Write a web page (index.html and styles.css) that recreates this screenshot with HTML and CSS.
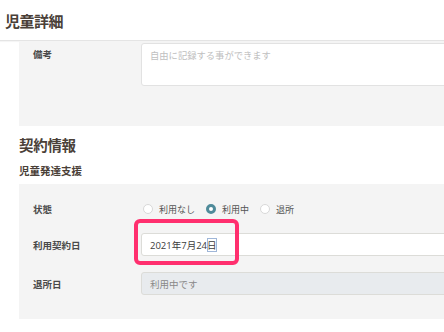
FILE: index.html
```html
<!DOCTYPE html>
<html lang="ja">
<head>
  <meta charset="UTF-8" />
  <title>児童詳細</title>
  <link rel="stylesheet" href="styles.css">
</head>
<body>
  <header class="page-head">
    <h1>児童詳細</h1>
  </header>

  <main class="content">
    <div class="panel memo">
      <div class="row">
        <div class="label label-top">備考</div>
        <div class="textarea">自由に記録する事ができます</div>
      </div>
    </div>

    <h2 class="section-title">契約情報</h2>
    <h3 class="sub-title">児童発達支援</h3>

    <div class="panel contract">
      <div class="row row-radio">
        <div class="label">状態</div>
        <div class="radios">
          <span class="radio"></span><span class="radio-text">利用なし</span>
          <span class="radio checked"></span><span class="radio-text">利用中</span>
          <span class="radio"></span><span class="radio-text">退所</span>
        </div>
      </div>
      <div class="row row-input">
        <div class="label">利用契約日</div>
        <div class="input">2021年7月24<span class="sel">日</span></div>
      </div>
      <div class="row row-input">
        <div class="label">退所日</div>
        <div class="input disabled">利用中です</div>
      </div>
      <div class="highlight"></div>
    </div>
  </main>
</body>
</html>
```

FILE: styles.css
```css
body {
  margin: 0;
  font-family: "Open Sans", "Noto Sans CJK JP", sans-serif;
  color: #4a4038;
  background: #fff;
  overflow: hidden;
  width: 444px;
  height: 332px;
}

.page-head {
  height: 40px;
  border-bottom: 1px solid #e4e4e4;
  box-shadow: 0 1px 1px rgba(0, 0, 0, 0.04);
  display: flex;
  align-items: center;
  padding-left: 5px;
}

.page-head h1 {
  margin: 0;
  font-size: 15px;
  font-weight: bold;
  letter-spacing: -0.5px;
  color: #4a4038;
}

.content {
  padding-left: 19px;
}

.panel {
  background: #f4f4f4;
  padding-left: 14px;
  position: relative;
  overflow: hidden;
}

.row {
  display: grid;
  grid-template-columns: 108px 1fr;
  align-items: center;
}

.label {
  font-size: 9.5px;
  font-weight: bold;
  color: #4a4a4a;
}

.memo {
  padding-top: 2px;
  padding-bottom: 40px;
}

.memo .row {
  align-items: start;
}

.label-top {
  padding-top: 4px;
}

.textarea {
  width: calc(100% + 10px);
  height: 43px;
  box-sizing: border-box;
  background: #fff;
  border: 1px solid #e2e2e2;
  border-radius: 3px;
  padding: 4px 8px;
  font-size: 9.3px;
  color: #c0c0c0;
}

.section-title {
  margin: 0;
  padding-top: 10px;
  font-size: 14.5px;
  font-weight: bold;
  line-height: 20px;
  letter-spacing: -0.3px;
}

.sub-title {
  margin: 0;
  padding-top: 7px;
  font-size: 10.5px;
  font-weight: bold;
  line-height: 16px;
  height: 21px;
}

.contract {
  padding-top: 15px;
  padding-bottom: 24px;
}

.row-radio {
  height: 20px;
  margin-bottom: 14px;
}

.row-input + .row-input {
  margin-top: 16px;
}

.radios {
  display: flex;
  align-items: center;
  font-size: 9px;
  color: #555;
}

.radio {
  width: 10px;
  height: 10px;
  border: 1px solid #d8d8d8;
  border-radius: 50%;
  background: #fff;
  box-sizing: border-box;
  margin-left: 2px;
  margin-right: 6px;
}

.radio-text {
  margin-right: 9px;
}

.radio.checked {
  border: 3px solid #4f8b9a;
}

.input {
  width: calc(100% + 10px);
  height: 23px;
  box-sizing: border-box;
  background: #fff;
  border: 1px solid #dcdcd8;
  border-radius: 3px;
  padding-left: 8px;
  display: flex;
  align-items: center;
  font-size: 9.5px;
  color: #3c3c3c;
}

.input .sel {
  outline: 1px solid #9fb6d8;
  outline-offset: -1px;
}

.input.disabled {
  background: #e8ebee;
  color: #888;
}

.highlight {
  position: absolute;
  left: 115px;
  top: 35px;
  width: 105px;
  height: 46px;
  box-sizing: border-box;
  border: 4px solid #ff2f6e;
  border-radius: 6px;
}
```
